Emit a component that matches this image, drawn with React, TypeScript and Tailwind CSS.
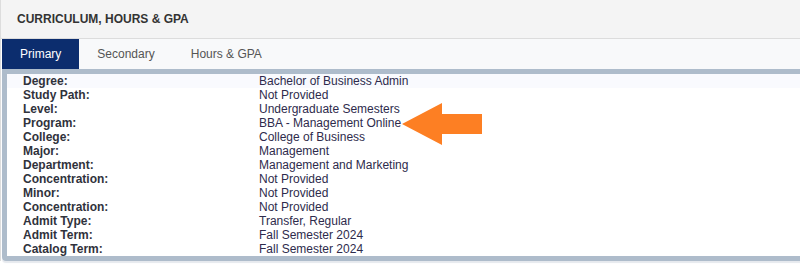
const rows: [string, string][] = [
  ["Degree:", "Bachelor of Business Admin"],
  ["Study Path:", "Not Provided"],
  ["Level:", "Undergraduate Semesters"],
  ["Program:", "BBA - Management Online"],
  ["College:", "College of Business"],
  ["Major:", "Management"],
  ["Department:", "Management and Marketing"],
  ["Concentration:", "Not Provided"],
  ["Minor:", "Not Provided"],
  ["Concentration:", "Not Provided"],
  ["Admit Type:", "Transfer, Regular"],
  ["Admit Term:", "Fall Semester 2024"],
  ["Catalog Term:", "Fall Semester 2024"],
];

const tabs = ["Primary", "Secondary", "Hours & GPA"];

export default function App() {
  return (
    <div className="w-[800px] h-[266px] overflow-hidden bg-white font-['Liberation_Sans',Arial,sans-serif] text-[12px]">
      <div className="w-[820px] border-l border-[#dddddd]">
        <div className="h-[39px] pl-[16px] flex items-center bg-[#f4f4f4] border-b border-[#dcdcdc] font-bold text-[#333333]">
          CURRICULUM, HOURS &amp; GPA
        </div>
        <div className="ml-[1px] flex h-[30px] bg-[#f8f9fa]">
          {tabs.map((t, i) => (
            <div
              key={t}
              className={
                i === 0
                  ? "px-[18px] flex items-center bg-[#0c2d6e] text-white"
                  : "px-[18px] flex items-center text-[#555555]"
              }
            >
              {t}
            </div>
          ))}
        </div>
        <div className="ml-[1px] border-[5px] border-[#aebccb] rounded-b-[4px] shadow-[0_2px_1px_#e6e9ee]">
          <div className="relative">
            {rows.map(([label, value], i) => (
              <div
                key={i}
                className={
                  i === 0
                    ? "grid grid-cols-[236px_1fr] pl-[16px] h-[14px] leading-[14px] bg-[#f9fafe]"
                    : "grid grid-cols-[236px_1fr] pl-[16px] h-[14px] leading-[14px]"
                }
              >
                <span className="font-bold text-[#30323c]">{label}</span>
                <span className="text-[#2e2b4c]">{value}</span>
              </div>
            ))}
            <svg className="absolute left-[395px] top-[29px]" width="80" height="42" viewBox="0 0 80 42">
              <polygon points="0,21 40,0 40,11 80,11 80,31 40,31 40,42" fill="#fd7f23" />
            </svg>
          </div>
        </div>
      </div>
    </div>
  );
}
